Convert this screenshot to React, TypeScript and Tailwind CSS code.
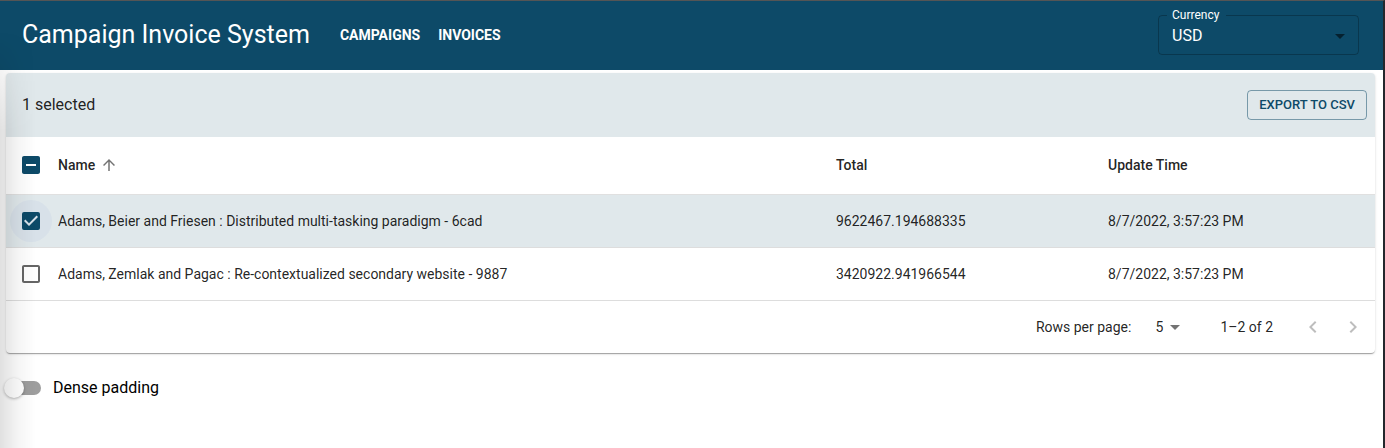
import { useState } from "react";
import {
  MdArrowDropDown,
  MdArrowUpward,
  MdCheckBox,
  MdCheckBoxOutlineBlank,
  MdIndeterminateCheckBox,
  MdKeyboardArrowLeft,
  MdKeyboardArrowRight,
} from "react-icons/md";

type Campaign = { id: number; name: string; total: string; updated: string };

const campaigns: Campaign[] = [
  {
    id: 1,
    name: "Adams, Beier and Friesen : Distributed multi-tasking paradigm - 6cad",
    total: "9622467.194688335",
    updated: "8/7/2022, 3:57:23 PM",
  },
  {
    id: 2,
    name: "Adams, Zemlak and Pagac : Re-contextualized secondary website - 9887",
    total: "3420922.941966544",
    updated: "8/7/2022, 3:57:23 PM",
  },
];

type TickBoxProps = {
  label: string;
  checked: boolean;
  partial?: boolean;
  halo?: boolean;
  onChange: () => void;
};

function TickBox({ label, checked, partial, halo, onChange }: TickBoxProps) {
  const Icon = partial ? MdIndeterminateCheckBox : checked ? MdCheckBox : MdCheckBoxOutlineBlank;
  return (
    <span
      className={`ml-1 grid size-[42px] place-items-center rounded-full ${halo ? "bg-[#1950d2]/4" : ""}`}
    >
      <input
        type="checkbox"
        aria-label={label}
        checked={checked}
        onChange={onChange}
        className="col-start-1 row-start-1 size-6 cursor-pointer appearance-none"
      />
      <Icon
        aria-hidden
        className={`pointer-events-none col-start-1 row-start-1 size-6 ${
          checked || partial ? "text-[#0d4a68]" : "text-[#666666]"
        }`}
      />
    </span>
  );
}

function Header() {
  return (
    <header className="flex h-[69px] items-center bg-[#0d4a68] pr-6 pl-[22px] text-white">
      <h1 className="pb-0.5 text-[25px] leading-8 font-normal">Campaign Invoice System</h1>
      <nav className="ml-[30px] flex flex-1 gap-[18px] pb-0.5 text-sm leading-6 font-bold">
        <a href="#campaigns">CAMPAIGNS</a>
        <a href="#invoices">INVOICES</a>
      </nav>
      <fieldset className="mb-[7px] w-[201px] rounded border border-black/25 pr-1.5 pl-2">
        <legend className="pr-[7px] pl-[5px] text-xs leading-3">
          <label htmlFor="currency">Currency</label>
        </legend>
        <div className="grid items-center pt-px pb-1">
          <select
            id="currency"
            defaultValue="USD"
            className="col-start-1 row-start-1 h-7 w-full appearance-none bg-transparent pl-[5px] text-base outline-none"
          >
            <option>USD</option>
            <option>EUR</option>
            <option>GBP</option>
          </select>
          <MdArrowDropDown
            aria-hidden
            className="pointer-events-none col-start-1 row-start-1 size-6 justify-self-end text-black/55"
          />
        </div>
      </fieldset>
    </header>
  );
}

export default function App() {
  const [selected, setSelected] = useState<number[]>([1]);
  const [dense, setDense] = useState(false);
  const all = selected.length === campaigns.length;
  const toggle = (id: number) =>
    setSelected((ids) => (ids.includes(id) ? ids.filter((i) => i !== id) : [...ids, id]));

  return (
    <div className="relative min-h-screen border-t border-r-2 border-t-[#555555] border-r-[#24272c] bg-white font-['Roboto',sans-serif] text-black/87">
      <Header />
      <main className="pt-[3px] pr-2 pl-1.5">
        <section className="rounded bg-white shadow-[0_2px_1px_-1px_rgba(0,0,0,0.2),0_1px_1px_0_rgba(0,0,0,0.14),0_1px_3px_0_rgba(0,0,0,0.12)]">
          <div className="flex h-16 items-center justify-between rounded-t bg-[#e0e8eb] pr-2 pl-4">
            <p className="text-base">{selected.length} selected</p>
            <button
              type="button"
              className="h-[30px] rounded border border-[#0d4a68]/50 px-[11px] text-[13px] font-medium text-[#0d4a68]"
            >
              EXPORT TO CSV
            </button>
          </div>
          <table className="w-full table-fixed border-collapse text-left text-sm">
            <colgroup>
              <col className="w-[52px]" />
              <col />
              <col className="w-[272px]" />
              <col className="w-[283px]" />
            </colgroup>
            <thead>
              <tr className="h-[57px] border-b border-[#e0e0e0]">
                <th className="p-0">
                  <TickBox
                    label="Select all campaigns"
                    checked={all}
                    partial={selected.length > 0 && !all}
                    onChange={() => setSelected(all ? [] : campaigns.map((c) => c.id))}
                  />
                </th>
                <th className="p-0 font-medium" aria-sort="ascending">
                  <button type="button" className="flex items-center gap-[5px]">
                    Name
                    <MdArrowUpward aria-hidden className="size-[18px] text-black/55" />
                  </button>
                </th>
                <th className="px-4 py-0 font-medium">Total</th>
                <th className="px-4 py-0 font-medium">Update Time</th>
              </tr>
            </thead>
            <tbody>
              {campaigns.map((c) => {
                const on = selected.includes(c.id);
                return (
                  <tr
                    key={c.id}
                    className={`border-b border-[#dddddd] ${dense ? "h-[43px]" : "h-[53px]"} ${on ? "bg-[#e0e8eb]" : ""}`}
                  >
                    <td className="p-0">
                      <TickBox label={c.name} checked={on} halo={on} onChange={() => toggle(c.id)} />
                    </td>
                    <td className="p-0">{c.name}</td>
                    <td className="px-4 py-0">{c.total}</td>
                    <td className="px-4 py-0">{c.updated}</td>
                  </tr>
                );
              })}
            </tbody>
          </table>
          <div className="flex h-[52px] items-center justify-end pr-2.5 text-sm">
            <label htmlFor="rows">Rows per page:</label>
            <div className="mr-[33px] ml-4 grid w-10 items-center">
              <select
                id="rows"
                defaultValue="5"
                className="col-start-1 row-start-1 h-6 w-full appearance-none bg-transparent pl-2 outline-none"
              >
                <option>5</option>
                <option>10</option>
                <option>25</option>
              </select>
              <MdArrowDropDown
                aria-hidden
                className="pointer-events-none col-start-1 row-start-1 size-6 justify-self-end text-black/55"
              />
            </div>
            <p>1–2 of 2</p>
            <div className="ml-7 flex gap-4 text-black/26">
              <button type="button" disabled aria-label="Previous page">
                <MdKeyboardArrowLeft className="size-6" />
              </button>
              <button type="button" disabled aria-label="Next page">
                <MdKeyboardArrowRight className="size-6" />
              </button>
            </div>
          </div>
        </section>
        <label className="mt-[23px] flex h-6 items-center gap-3 text-base text-black">
          <span className="grid items-center">
            <input
              type="checkbox"
              role="switch"
              checked={dense}
              onChange={() => setDense(!dense)}
              className="col-start-1 row-start-1 ml-px h-3.5 w-[34px] appearance-none rounded-full bg-[#9e9e9e] checked:bg-[#86a4b3]"
            />
            <span
              className={`pointer-events-none col-start-1 row-start-1 size-5 rounded-full bg-white shadow-[0_1px_3px_rgba(0,0,0,0.3)] ${dense ? "ml-4" : "-ml-0.5"}`}
            />
          </span>
          Dense padding
        </label>
      </main>
      <div className="pointer-events-none absolute inset-y-0 left-0 w-9 bg-linear-to-r from-black/12 via-black/4 to-transparent [mask-image:linear-gradient(to_bottom,transparent_30px,black_130px)]" />
    </div>
  );
}
